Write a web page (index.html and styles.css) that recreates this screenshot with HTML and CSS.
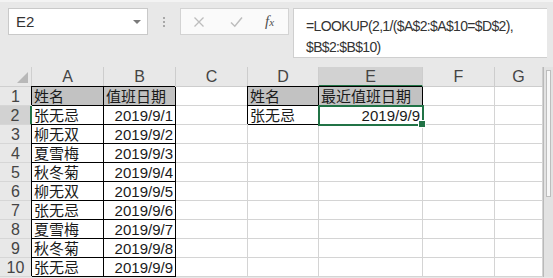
FILE: index.html
```html
<!DOCTYPE html>
<html>
<head>
<meta charset="utf-8">
<link rel="stylesheet" href="styles.css">
</head>
<body>
<div class="app">
  <div class="topbar">
    <div class="namebox"><span class="ref">E2</span><span class="caret"></span></div>
    <div class="dots"><i></i><i></i><i></i></div>
    <div class="btns">
      <svg class="ico" width="12" height="12" viewBox="0 0 12 12"><path d="M1.5 1.5 L10.5 10.5 M10.5 1.5 L1.5 10.5" stroke="#bdbdbd" stroke-width="1.3" fill="none"/></svg>
      <svg class="ico" width="13" height="12" viewBox="0 0 13 12"><path d="M1 6.5 L4.8 10.2 L12 1.5" stroke="#bdbdbd" stroke-width="1.5" fill="none"/></svg>
      <span class="fx">f<span class="fxx">x</span></span>
    </div>
    <div class="formula">=LOOKUP(2,1/($A$2:$A$10=$D$2),<br>$B$2:$B$10)</div>
  </div>
  <div class="sheet">
    <div class="corner"><span class="tri"></span></div>
    <div class="h">A</div><div class="h">B</div><div class="h">C</div><div class="h">D</div><div class="h sel">E</div><div class="h">F</div><div class="h">G</div>
    <div class="scroll"><div class="thumb"></div></div>

    <div class="r">1</div>
    <div class="c t fill">姓名</div><div class="c t fill">值班日期</div><div class="c"></div><div class="c t fill">姓名</div><div class="c t fill">最近值班日期</div><div class="c"></div><div class="c"></div>

    <div class="r sel">2</div>
    <div class="c t nl">张无忌</div><div class="c t num">2019/9/1</div><div class="c"></div><div class="c t">张无忌</div><div class="c t num cur">2019/9/9</div><div class="c"></div><div class="c"></div>

    <div class="r">3</div>
    <div class="c t">柳无双</div><div class="c t num">2019/9/2</div><div class="c"></div><div class="c"></div><div class="c"></div><div class="c"></div><div class="c"></div>

    <div class="r">4</div>
    <div class="c t">夏雪梅</div><div class="c t num">2019/9/3</div><div class="c"></div><div class="c"></div><div class="c"></div><div class="c"></div><div class="c"></div>

    <div class="r">5</div>
    <div class="c t">秋冬菊</div><div class="c t num">2019/9/4</div><div class="c"></div><div class="c"></div><div class="c"></div><div class="c"></div><div class="c"></div>

    <div class="r">6</div>
    <div class="c t">柳无双</div><div class="c t num">2019/9/5</div><div class="c"></div><div class="c"></div><div class="c"></div><div class="c"></div><div class="c"></div>

    <div class="r">7</div>
    <div class="c t">张无忌</div><div class="c t num">2019/9/6</div><div class="c"></div><div class="c"></div><div class="c"></div><div class="c"></div><div class="c"></div>

    <div class="r">8</div>
    <div class="c t">夏雪梅</div><div class="c t num">2019/9/7</div><div class="c"></div><div class="c"></div><div class="c"></div><div class="c"></div><div class="c"></div>

    <div class="r">9</div>
    <div class="c t">秋冬菊</div><div class="c t num">2019/9/8</div><div class="c"></div><div class="c"></div><div class="c"></div><div class="c"></div><div class="c"></div>

    <div class="r">10</div>
    <div class="c t">张无忌</div><div class="c t num">2019/9/9</div><div class="c"></div><div class="c"></div><div class="c"></div><div class="c"></div><div class="c"></div>
  </div>
</div>
</body>
</html>
```

FILE: styles.css
```css
* { box-sizing: border-box; }
html, body { margin: 0; padding: 0; }
body {
  width: 553px;
  height: 278px;
  overflow: hidden;
  background: #e8e8e8;
  font-family: "Liberation Sans", "Noto Sans CJK SC", sans-serif;
  color: #222;
}
.app { display: flex; flex-direction: column; }

.topbar {
  height: 67px;
  display: flex;
  align-items: flex-start;
  padding: 8px 0 0 8px;
  border-top: 2px solid #f3f3f3;
  background: #e8e8e8;
}
.namebox {
  width: 140px;
  height: 27px;
  margin-top: -2px;
  background: #fff;
  border: 1px solid #c9c9c9;
  display: flex;
  align-items: center;
  justify-content: space-between;
  padding: 0 6px 0 7px;
}
.ref { font-size: 15px; color: #333; }
.caret {
  width: 0; height: 0;
  border-left: 4px solid transparent;
  border-right: 4px solid transparent;
  border-top: 4px solid #7a7a7a;
}
.dots {
  width: 32px;
  height: 27px;
  margin-top: -2px;
  display: flex;
  flex-direction: column;
  align-items: center;
  justify-content: center;
  gap: 2px;
}
.dots i { display: block; width: 2px; height: 2px; background: #a8a8a8; }
.btns {
  width: 109px;
  height: 27px;
  margin-top: -2px;
  background: #fafafa;
  border: 1px solid #d3d3d3;
  display: flex;
  align-items: center;
  padding-left: 12px;
  gap: 25px;
}
.fx {
  font-family: "Liberation Serif", serif;
  font-style: italic;
  font-size: 15px;
  color: #505050;
  margin-left: -3px;
}
.fxx { font-size: 11px; }
.formula {
  width: 254px;
  height: 50px;
  margin-top: -2px;
  margin-left: 4px;
  background: #fff;
  border: 1px solid #cfcfcf;
  border-right: none;
  padding: 7px 0 0 12px;
  font-size: 14px;
  letter-spacing: -0.65px;
  line-height: 21px;
  color: #333;
  white-space: nowrap;
}

.sheet {
  display: grid;
  grid-template-columns: 32px 72px 72px 72px 71px 104px 72px 48px 10px;
  grid-template-rows: 20px repeat(10, 19px);
  background: #fff;
}
.corner {
  background: #e8e8e8;
  border-right: 1px solid #cfcfcf;
  border-bottom: 1px solid #cfcfcf;
  display: flex;
  align-items: flex-end;
  justify-content: flex-end;
  padding: 0 3px 3px 0;
}
.tri {
  width: 0; height: 0;
  border-left: 11px solid transparent;
  border-bottom: 11px solid #b8b8b8;
}
.h {
  background: #e8e8e8;
  border-right: 1px solid #cdcdcd;
  border-bottom: 1px solid #cdcdcd;
  text-align: center;
  font-size: 16px;
  line-height: 20px;
  color: #444;
}
.h.sel {
  background: #d2d2d2;
  border-bottom: 2px solid #217346;
  line-height: 19px;
}
.scroll {
  grid-column: 9;
  grid-row: 1 / -1;
  background: #e2e2e2;
  border-left: 1px solid #b9b9b9;
  padding: 3px 2px 0 2px;
}
.thumb {
  height: 127px;
  background: #f7f7f7;
  border: 1px solid #bdbdbd;
}
.r {
  background: #e8e8e8;
  border-right: 1px solid #cdcdcd;
  border-bottom: 1px solid #d6d6d6;
  text-align: center;
  font-size: 16px;
  line-height: 19px;
  color: #444;
}
.r.sel {
  background: #d2d2d2;
  border-right: 2px solid #217346;
}
.c {
  border-right: 1px solid #d4d4d4;
  border-bottom: 1px solid #d4d4d4;
  padding: 0 2px;
  font-size: 15px;
  line-height: 19px;
  white-space: nowrap;
  overflow: hidden;
  color: #1a1a1a;
}
.c.t {
  border-right-color: #000;
  border-bottom-color: #000;
  box-shadow: -1px -1px 0 #000;
}
.c.t.nl { box-shadow: 0 -1px 0 #000; }
.c.fill { background: #c2c2c2; }
.c.num { text-align: right; }
.c.cur {
  position: relative;
  overflow: visible;
  outline: 2px solid #217346;
  outline-offset: -1px;
  box-shadow: none;
}
.c.cur::after {
  content: "";
  position: absolute;
  right: -4px;
  bottom: -4px;
  width: 6px;
  height: 6px;
  background: #217346;
  border: 1px solid #fff;
}
```
